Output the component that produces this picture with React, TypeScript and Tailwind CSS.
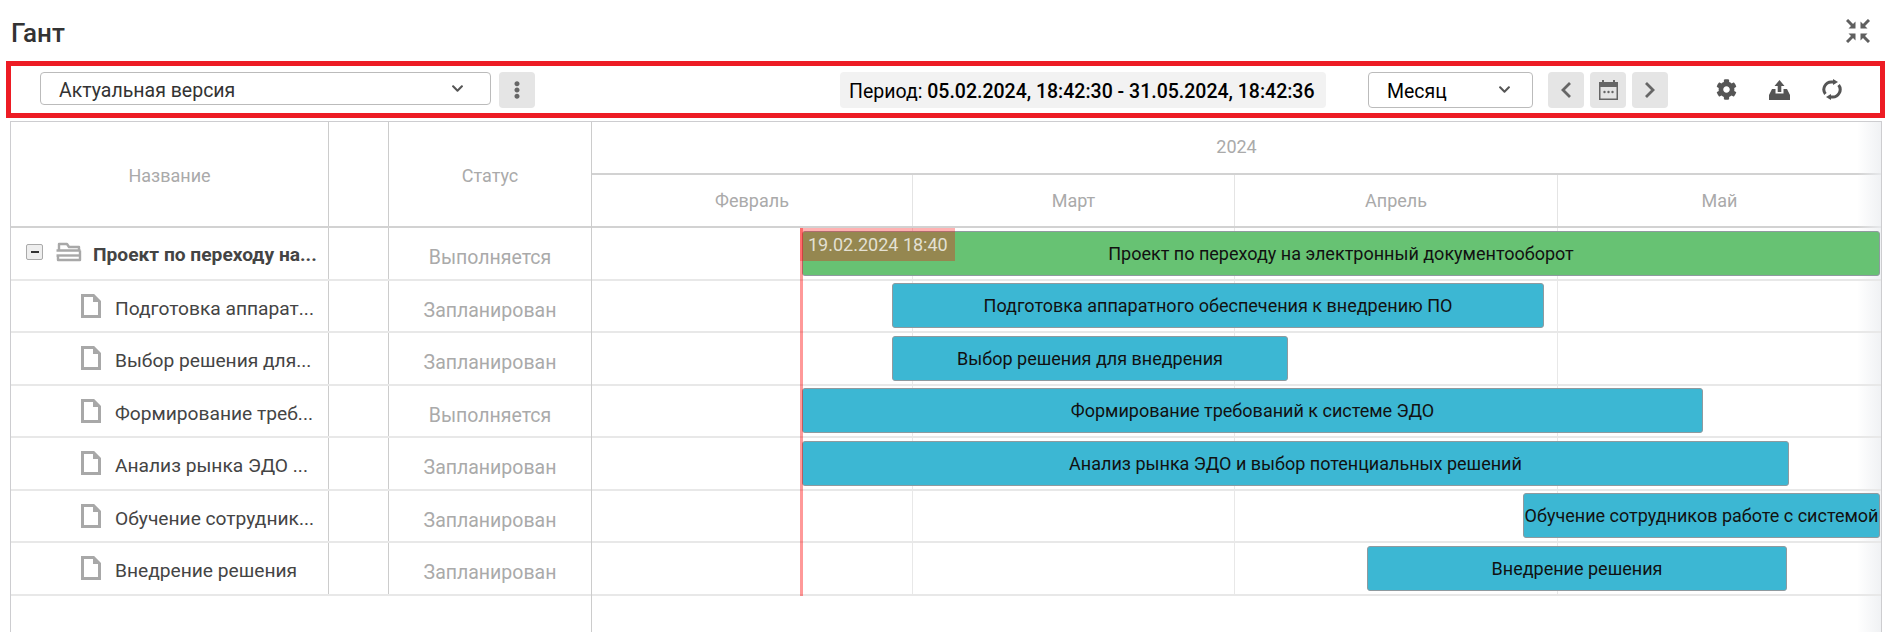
import { FaChevronDown, FaCog, FaEllipsisV } from "react-icons/fa";

const font = "font-['Roboto',sans-serif]";

const rows = [
  { name: "Проект по переходу на...", status: "Выполняется", bar: "Проект по переходу на электронный документооборот", left: 210, width: 1078, green: true },
  { name: "Подготовка аппарат...", status: "Запланирован", bar: "Подготовка аппаратного обеспечения к внедрению ПО", left: 300, width: 652 },
  { name: "Выбор решения для...", status: "Запланирован", bar: "Выбор решения для внедрения", left: 300, width: 396 },
  { name: "Формирование треб...", status: "Выполняется", bar: "Формирование требований к системе ЭДО", left: 210, width: 901 },
  { name: "Анализ рынка ЭДО ...", status: "Запланирован", bar: "Анализ рынка ЭДО и выбор потенциальных решений", left: 210, width: 987 },
  { name: "Обучение сотрудник...", status: "Запланирован", bar: "Обучение сотрудников работе с системой", left: 931, width: 357 },
  { name: "Внедрение решения", status: "Запланирован", bar: "Внедрение решения", left: 775, width: 420 },
];

const months = ["Февраль", "Март", "Апрель", "Май"];

function FileIcon() {
  return (
    <svg width="20" height="24" viewBox="0 0 20 24" className="shrink-0">
      <path d="M1.500 1.500h11l6 6v15H1.500z" fill="#fff" stroke="#a8a8a8" strokeWidth="3" />
      <path d="M12 0v8h8z" fill="#a8a8a8" />
    </svg>
  );
}

function FolderIcon() {
  return (
    <svg width="27" height="20" viewBox="0 0 27 20" fill="none" stroke="#a8a8a8" strokeWidth="2.400" strokeLinejoin="round" className="shrink-0">
      <path d="M4 8V2h8l2 3h10v3" />
      <path d="M1.500 8.500h24M25 8.500V18H3v-4" />
      <path d="M1.500 13.500h24" />
    </svg>
  );
}

function CalendarIcon() {
  return (
    <svg width="19" height="20" viewBox="0 0 19 20" fill="#666">
      <path d="M0 2h3V0h2v2h9V0h2v2h3v18H0zm1.500 5v11.500h16V7z" />
      <circle cx="5.500" cy="12" r="1.200" />
      <circle cx="9.500" cy="12" r="1.200" />
      <circle cx="13.500" cy="12" r="1.200" />
    </svg>
  );
}

function UploadIcon() {
  return (
    <svg width="21" height="20" viewBox="0 0 21 20" fill="#555">
      <path d="M10.500 0l5 6h-3.200v6H8.700V6H5.500z" />
      <path d="M3 9h3.500v4.500h8V9H18l3 6v5H0v-5z" />
    </svg>
  );
}

function SyncIcon() {
  return (
    <svg width="20" height="21" viewBox="0 0 20 21" fill="none" stroke="#555" strokeWidth="3">
      <path d="M3.400 15A7.500 7.500 0 0 1 10 3h1.500" />
      <path d="M16.600 6A7.500 7.500 0 0 1 10 18H8.500" />
      <path d="M11 0l5 3-5 3z" fill="#555" stroke="none" />
      <path d="M9 15l-5 3 5 3z" fill="#555" stroke="none" />
    </svg>
  );
}

function CollapseIcon() {
  return (
    <svg width="24" height="24" viewBox="0 0 24 24" fill="#5f5f5f" stroke="#5f5f5f">
      <path d="M9.500 9.500V2.500L2.500 9.500z" strokeWidth="0" />
      <path d="M1 1l6 6" strokeWidth="3" fill="none" />
      <path d="M14.500 9.500V2.500L21.500 9.500z" strokeWidth="0" />
      <path d="M23 1l-6 6" strokeWidth="3" fill="none" />
      <path d="M9.500 14.500V21.500L2.500 14.500z" strokeWidth="0" />
      <path d="M1 23l6-6" strokeWidth="3" fill="none" />
      <path d="M14.500 14.500V21.500L21.500 14.500z" strokeWidth="0" />
      <path d="M23 23l-6-6" strokeWidth="3" fill="none" />
    </svg>
  );
}

function Chevron({ d }: { d: string }) {
  return (
    <svg width="12" height="18" viewBox="0 0 12 18" fill="none" stroke="#666" strokeWidth="2.800">
      <path d={d} />
    </svg>
  );
}

function ToolButton({ children, className }: { children: React.ReactNode; className: string }) {
  return <button className={`h-9 flex items-center justify-center rounded bg-[#e5e5e5] text-[#666] ${className}`}>{children}</button>;
}

export default function App() {
  return (
    <div className={`${font} w-[1899px] h-[632px] overflow-hidden bg-white text-[#333]`}>
      {/* HEADER */}
      <div className="h-[61px] pl-[11px] pr-[29px] flex items-center justify-between">
        <h1 className="text-[26px] font-medium text-[#333] relative top-[3px]">Гант</h1>
        <CollapseIcon />
      </div>

      {/* TOOLBAR */}
      <div className="ml-[6px] w-[1879px] h-[57px] border-[5px] border-[#ed1c24] flex items-center pl-[29px]">
        <div className="w-[451px] h-[33px] -mt-[3px] border border-[#bbb] rounded flex items-center justify-between pl-[18px] pr-[26px] text-[19.5px]">
          <span className="pt-[5px]">Актуальная версия</span>
          <FaChevronDown size={13} className="text-[#555]" />
        </div>
        <ToolButton className="w-9 ml-[8px]">
          <FaEllipsisV size={18} />
        </ToolButton>
        <div className="ml-[305px] w-[486px] h-9 rounded bg-[#f2f2f2] flex items-center pl-[9px] pt-[4px] text-[19.5px] text-black whitespace-nowrap">
          Период:&nbsp;<span className="font-medium">05.02.2024, 18:42:30 - 31.05.2024, 18:42:36</span>
        </div>
        <div className="ml-[42px] w-[165px] h-9 border border-[#bbb] rounded flex items-center justify-between pl-[18px] pr-[21px] text-[19.5px] text-black">
          <span className="pt-[4px]">Месяц</span>
          <FaChevronDown size={13} className="text-[#555]" />
        </div>
        <ToolButton className="w-9 ml-[15px]">
          <Chevron d="M10 2L3 9l7 7" />
        </ToolButton>
        <ToolButton className="w-9 ml-[6px]">
          <CalendarIcon />
        </ToolButton>
        <ToolButton className="w-9 ml-[6px]">
          <Chevron d="M2 2l7 7-7 7" />
        </ToolButton>
        <div className="ml-[48px] flex items-center gap-[32px] text-[#555]">
          <FaCog size={21} />
          <UploadIcon />
          <SyncIcon />
        </div>
      </div>

      {/* TABLE */}
      <div className="relative ml-[10px] mt-[3px] w-[1872px] h-[511px] border-l border-r border-t border-[#cdcdd0] flex">
        <div className="w-[580px] shrink-0">
          <div className="h-[106px] flex border-b-2 border-[#d2d2d2] text-[#aaa] text-[18px]">
            <div className="w-[318px] flex items-center justify-center border-r border-[#ccc] pt-[2px]">Название</div>
            <div className="w-[60px] border-r border-[#ccc]" />
            <div className="flex-1 flex items-center justify-center pt-[2px]">Статус</div>
          </div>
          {rows.map((row, i) => (
            <div key={row.name} className="h-[52.5px] flex border-b-2 border-[#e8e8e8] text-[19.2px]">
              <div className="w-[318px] flex items-center border-r border-[#ccc] whitespace-nowrap overflow-hidden text-[#444]">
                {i === 0 ? (
                  <div className="flex items-center pl-[15px]">
                    <span className="w-[17px] h-[16px] border border-[#aaa] rounded-[2px] bg-[#eee] flex items-center justify-center -mt-[2px]">
                      <span className="w-[8px] h-[2px] bg-[#333]" />
                    </span>
                    <span className="ml-[12px] -mt-[2px]"><FolderIcon /></span>
                    <span className="ml-[11px] font-bold text-[#444] pt-[5px]">{row.name}</span>
                  </div>
                ) : (
                  <div className="flex items-center pl-[70px]">
                    <FileIcon />
                    <span className="ml-[14px] pt-[7px]">{row.name}</span>
                  </div>
                )}
              </div>
              <div className="w-[60px] border-r border-[#ccc]" />
              <div className="flex-1 flex items-center justify-center text-[#aaa] pt-[9px] text-[19.5px]">{row.status}</div>
            </div>
          ))}
        </div>

        {/* TIMELINE */}
        <div className="relative flex-1 border-l border-[#ccc] overflow-hidden">
          <div className="absolute right-0 top-0 bottom-0 w-[24px] bg-gradient-to-r from-transparent to-[#eceef1]/80 pointer-events-none" />
          <div className="h-[53px] flex items-center justify-center border-b-2 border-[#d2d2d2] text-[#aaa] text-[18px] pb-[2px]">2024</div>
          <div className="h-[53px] grid grid-cols-[321px_322px_323px_1fr] border-b-2 border-[#d2d2d2] text-[#aaa] text-[18px]">
            {months.map((month) => (
              <div key={month} className="flex items-center justify-center border-r border-[#e4e4e4] last:border-r-0">{month}</div>
            ))}
          </div>
          <div className="relative">
            <div className="absolute inset-x-0 top-0 grid grid-cols-[321px_322px_323px_1fr] h-[367.5px]">
              {months.map((month) => (
                <div key={month} className="border-r border-[#e8e8e8] last:border-r-0" />
              ))}
            </div>
            {rows.map((row) => (
              <div key={row.bar} className="relative h-[52.5px] border-b-2 border-[#e8e8e8]">
                <div
                  className={`absolute z-10 top-[2.5px] h-[45px] rounded-[3px] border border-[#8f9a9f] flex items-center justify-center text-[18px] text-[#111] whitespace-nowrap overflow-hidden ${row.green ? "bg-[#67c273]" : "bg-[#3cb7d3]"}`}
                  style={{ left: row.left, width: row.width }}
                >
                  {row.bar}
                </div>
              </div>
            ))}
            {/* today line */}
            <div className="absolute z-20 left-[208px] top-0 w-[3px] h-[367.5px] bg-[#ff0000]/40" />
            <div className="absolute z-20 left-[208px] top-0 w-[155px] h-[33px] bg-[#ff0000]/30 pl-[8px] text-[18px] leading-[33px] text-white/75 whitespace-nowrap">19.02.2024 18:40</div>
          </div>
        </div>
      </div>
    </div>
  );
}
